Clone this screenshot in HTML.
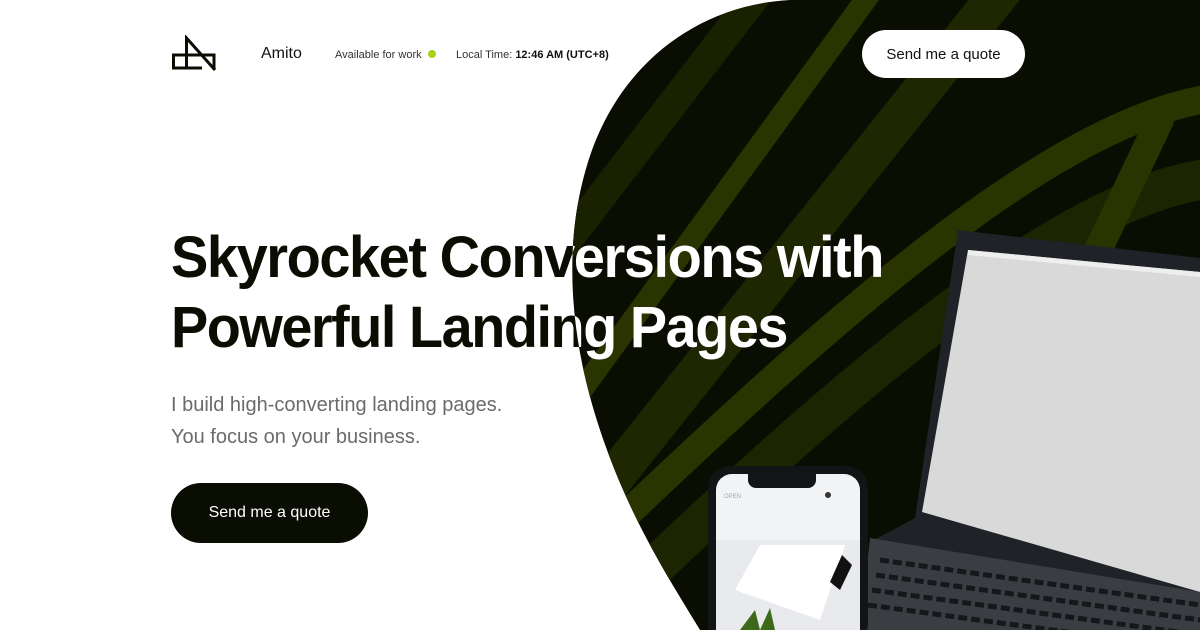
<!DOCTYPE html>
<html><head><meta charset="utf-8"><style>
html,body{margin:0;width:1200px;height:630px;overflow:hidden}
body{background:#fff;font-family:"Liberation Sans",sans-serif;position:relative}
svg{position:absolute;left:0;top:0}
.t{position:absolute;white-space:nowrap;color:#111}
.btn{position:absolute;border-radius:30px;display:flex;align-items:center;justify-content:center}
</style></head><body>
<svg width="1200" height="630" viewBox="0 0 1200 630">
<defs>
<clipPath id="blob"><path d="M790 0 C700 5 625 60 592 150 C560 240 570 340 600 430 C630 520 670 580 700 630 L1200 630 L1200 0 Z"/></clipPath>
</defs>
<path d="M790 0 C700 5 625 60 592 150 C560 240 570 340 600 430 C630 520 670 580 700 630 L1200 630 L1200 0 Z" fill="#0a0d02"/>
<g clip-path="url(#blob)" fill="none" stroke-linecap="round">
<path d="M880 -20 L560 420" stroke="#2a3400" stroke-width="22"/>
<path d="M760 -10 L560 250" stroke="#1a2101" stroke-width="30"/>
<path d="M1010 -20 L580 520" stroke="#1e2602" stroke-width="40"/>
<path d="M1200 100 C1050 130 850 300 600 540" stroke="#2a3400" stroke-width="28"/>
<path d="M1200 180 C1080 200 900 330 620 600" stroke="#1c2402" stroke-width="40"/>
<path d="M1160 120 L1060 330" stroke="#2a3400" stroke-width="28"/>
</g>
<g font-family="Liberation Sans" font-weight="bold" font-size="58" letter-spacing="-1.5">
<text x="171" y="277" textLength="712" lengthAdjust="spacingAndGlyphs" fill="#0a0d02">Skyrocket Conversions with</text>
<text x="171" y="347" textLength="616" lengthAdjust="spacingAndGlyphs" fill="#0a0d02">Powerful Landing Pages</text>
<g clip-path="url(#blob)" fill="#fff">
<text x="171" y="277" textLength="712" lengthAdjust="spacingAndGlyphs">Skyrocket Conversions with</text>
<text x="171" y="347" textLength="616" lengthAdjust="spacingAndGlyphs">Powerful Landing Pages</text>
</g></g>
<!-- laptop -->
<polygon points="958,230 1200,258 1200,630 860,630 870,542 915,518" fill="#1f2226"/>
<polygon points="968,250 1200,272 1200,592 922,512" fill="#d9d9d9"/>
<polygon points="968,250 1200,272 1200,277 968,255" fill="#eee"/>
<polygon points="870,538 1200,592 1200,630 860,630" fill="#3a3d42"/>
<g stroke="#15171a" stroke-width="5" stroke-dasharray="9 4">
<line x1="880" y1="560" x2="1200" y2="605"/><line x1="876" y1="575" x2="1200" y2="620"/><line x1="872" y1="590" x2="1200" y2="635"/><line x1="868" y1="605" x2="1200" y2="650"/>
</g>
<!-- phone -->
<rect x="708" y="466" width="160" height="180" rx="22" fill="#121416"/>
<rect x="716" y="474" width="144" height="170" rx="16" fill="#f2f3f5"/>
<path d="M748 474 h68 v6 a8 8 0 0 1 -8 8 h-52 a8 8 0 0 1 -8 -8z" fill="#121416"/>
<text x="724" y="498" font-size="6" fill="#9ab" font-family="Liberation Sans">OPEN</text>
<circle cx="828" cy="495" r="3" fill="#333"/>
<rect x="716" y="540" width="144" height="90" fill="#e8eaee"/>
<polygon points="760,545 845,545 820,620 735,590" fill="#fff"/>
<polygon points="842,555 852,565 840,590 830,582" fill="#111"/>
<path d="M740 630 l15 -20 l5 20 l10 -22 l5 22z" fill="#3c6a1a"/>
</svg>
<svg width="46" height="38" style="left:171px;top:35px" viewBox="0 0 46 38"><path d="M2.5 20 H15.5 V33 H2.5 Z M15.5 20 V3 L44 35 M15.5 20 H43 V35 M15.5 33 H31" fill="none" stroke="#0a0d02" stroke-width="3"/></svg>
<div class="t" style="left:261px;top:45px;font-size:16px">Amito</div>
<div class="t" style="left:335px;top:49px;font-size:11px;color:#333">Available for work <span style="display:inline-block;width:8px;height:8px;border-radius:50%;background:#a8d11a;margin-left:3px"></span></div>
<div class="t" style="left:456px;top:49px;font-size:11px;color:#333">Local Time: <b style="color:#111">12:46 AM (UTC+8)</b></div>
<div class="btn" style="left:862px;top:30px;width:163px;height:48px;background:#fff;font-size:15px;color:#111">Send me a quote</div>
<div class="t" style="left:171px;top:389px;font-size:20px;line-height:32px;color:#6b6b6b">I build high-converting landing pages.<br>You focus on your business.</div>
<div class="btn" style="left:171px;top:483px;width:197px;height:60px;background:#0a0d02;color:#fff;font-size:16px">Send me a quote</div>
</body></html>
